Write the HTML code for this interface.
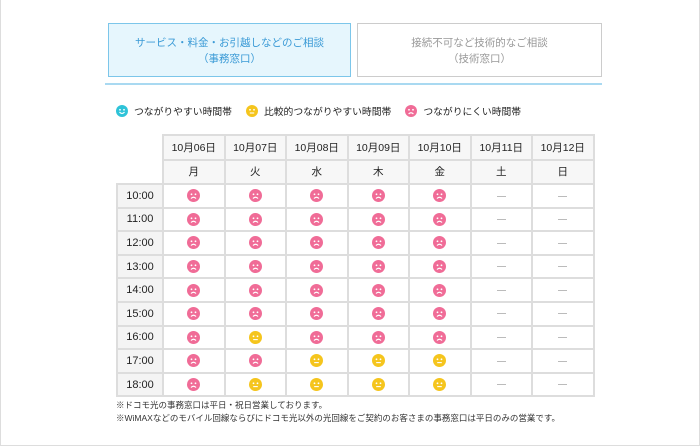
<!DOCTYPE html>
<html><head><meta charset="utf-8"><style>
*{margin:0;padding:0;box-sizing:border-box}
body{width:700px;height:446px;background:#fff;font-family:"Liberation Sans","Noto Sans CJK JP",sans-serif;position:relative;overflow:hidden}
.frame{position:absolute;left:0;top:0;width:700px;height:446px;border:1px solid #ddd;border-top:none}
.tab{position:absolute;top:23px;height:54px;text-align:center;font-size:10.5px;line-height:16px;padding-top:11px}
.t1{left:108px;width:243px;background:#e6f6fd;border:1px solid #7cc6ea;color:#3a9ad6}
.t2{left:357px;width:245px;background:#fff;border:1px solid #ccc;color:#999}
.line{position:absolute;left:105px;top:83px;width:497px;height:2px;background:#a9d9f1}
.legend{position:absolute;top:104px;left:116px;font-size:9.8px;color:#222;display:flex;align-items:center}
.legend span{display:flex;align-items:center;margin-right:14px}
.legend svg{margin-right:6px}
table{position:absolute;left:116px;top:134px;border-collapse:collapse;font-size:10.5px;color:#222}
td{border:2px solid #ddd;text-align:center;vertical-align:middle;height:23.6px;width:61.5px;padding:0}
tr.h td{height:24.5px;background:#f7f7f7}
tr.h td.e{border:none;background:#fff;width:46px}
td.tm{background:#f4f4f4;font-size:11px;width:46px}
td svg{display:block;margin:0 auto}
.dash{display:inline-block;width:9px;height:1px;background:#bbb;vertical-align:middle}
.note{position:absolute;left:116px;font-size:8.5px;color:#333}
</style></head><body>
<div class="frame"></div>
<div class="tab t1">サービス・料金・お引越しなどのご相談<br>（事務窓口）</div>
<div class="tab t2">接続不可など技術的なご相談<br>（技術窓口）</div>
<div class="line"></div>
<div class="legend">
<span><svg width="12" height="12" viewBox="0 0 12 12"><circle cx="6" cy="6" r="6" fill="#2ec3d8"/><circle cx="4" cy="4.8" r=".9" fill="#fff"/><circle cx="8" cy="4.8" r=".9" fill="#fff"/><path d="M3.5 7 Q6 10 8.5 7" stroke="#fff" stroke-width="1.2" fill="none"/></svg>つながりやすい時間帯</span>
<span><svg width="12" height="12" viewBox="0 0 12 12"><circle cx="6" cy="6" r="6" fill="#f5c51d"/><circle cx="4" cy="4.8" r=".9" fill="#fff"/><circle cx="8" cy="4.8" r=".9" fill="#fff"/><path d="M3.8 8H8.2" stroke="#fff" stroke-width="1.1"/></svg>比較的つながりやすい時間帯</span>
<span><svg width="12" height="12" viewBox="0 0 12 12"><circle cx="6" cy="6" r="6" fill="#f06c97"/><circle cx="4" cy="4.8" r=".9" fill="#fff"/><circle cx="8" cy="4.8" r=".9" fill="#fff"/><path d="M3.6 9 Q6 6.5 8.4 9" stroke="#fff" stroke-width="1.2" fill="none"/></svg>つながりにくい時間帯</span>
</div>
<svg width="0" height="0" style="position:absolute"><defs>
<g id="p"><circle cx="6.5" cy="6.5" r="6.5" fill="#f06c97"/><circle cx="4.5" cy="5.3" r=".9" fill="#fff"/><circle cx="8.5" cy="5.3" r=".9" fill="#fff"/><path d="M4 9.5 Q6.5 7 9 9.5" stroke="#fff" stroke-width="1.2" fill="none"/></g>
<g id="y"><circle cx="6.5" cy="6.5" r="6.5" fill="#f5c51d"/><circle cx="4.5" cy="5.3" r=".9" fill="#fff"/><circle cx="8.5" cy="5.3" r=".9" fill="#fff"/><path d="M4.2 8.6H8.8" stroke="#fff" stroke-width="1.1"/></g>
</defs></svg>
<table>
<tr class="h"><td class="e"></td><td>10月06日</td><td>10月07日</td><td>10月08日</td><td>10月09日</td><td>10月10日</td><td>10月11日</td><td>10月12日</td></tr>
<tr class="h"><td class="e"></td><td>月</td><td>火</td><td>水</td><td>木</td><td>金</td><td>土</td><td>日</td></tr>
<tr><td class="tm">10:00</td><td><svg width="13" height="13"><use href="#p"/></svg></td><td><svg width="13" height="13"><use href="#p"/></svg></td><td><svg width="13" height="13"><use href="#p"/></svg></td><td><svg width="13" height="13"><use href="#p"/></svg></td><td><svg width="13" height="13"><use href="#p"/></svg></td><td><span class="dash"></span></td><td><span class="dash"></span></td></tr>
<tr><td class="tm">11:00</td><td><svg width="13" height="13"><use href="#p"/></svg></td><td><svg width="13" height="13"><use href="#p"/></svg></td><td><svg width="13" height="13"><use href="#p"/></svg></td><td><svg width="13" height="13"><use href="#p"/></svg></td><td><svg width="13" height="13"><use href="#p"/></svg></td><td><span class="dash"></span></td><td><span class="dash"></span></td></tr>
<tr><td class="tm">12:00</td><td><svg width="13" height="13"><use href="#p"/></svg></td><td><svg width="13" height="13"><use href="#p"/></svg></td><td><svg width="13" height="13"><use href="#p"/></svg></td><td><svg width="13" height="13"><use href="#p"/></svg></td><td><svg width="13" height="13"><use href="#p"/></svg></td><td><span class="dash"></span></td><td><span class="dash"></span></td></tr>
<tr><td class="tm">13:00</td><td><svg width="13" height="13"><use href="#p"/></svg></td><td><svg width="13" height="13"><use href="#p"/></svg></td><td><svg width="13" height="13"><use href="#p"/></svg></td><td><svg width="13" height="13"><use href="#p"/></svg></td><td><svg width="13" height="13"><use href="#p"/></svg></td><td><span class="dash"></span></td><td><span class="dash"></span></td></tr>
<tr><td class="tm">14:00</td><td><svg width="13" height="13"><use href="#p"/></svg></td><td><svg width="13" height="13"><use href="#p"/></svg></td><td><svg width="13" height="13"><use href="#p"/></svg></td><td><svg width="13" height="13"><use href="#p"/></svg></td><td><svg width="13" height="13"><use href="#p"/></svg></td><td><span class="dash"></span></td><td><span class="dash"></span></td></tr>
<tr><td class="tm">15:00</td><td><svg width="13" height="13"><use href="#p"/></svg></td><td><svg width="13" height="13"><use href="#p"/></svg></td><td><svg width="13" height="13"><use href="#p"/></svg></td><td><svg width="13" height="13"><use href="#p"/></svg></td><td><svg width="13" height="13"><use href="#p"/></svg></td><td><span class="dash"></span></td><td><span class="dash"></span></td></tr>
<tr><td class="tm">16:00</td><td><svg width="13" height="13"><use href="#p"/></svg></td><td><svg width="13" height="13"><use href="#y"/></svg></td><td><svg width="13" height="13"><use href="#p"/></svg></td><td><svg width="13" height="13"><use href="#p"/></svg></td><td><svg width="13" height="13"><use href="#p"/></svg></td><td><span class="dash"></span></td><td><span class="dash"></span></td></tr>
<tr><td class="tm">17:00</td><td><svg width="13" height="13"><use href="#p"/></svg></td><td><svg width="13" height="13"><use href="#p"/></svg></td><td><svg width="13" height="13"><use href="#y"/></svg></td><td><svg width="13" height="13"><use href="#y"/></svg></td><td><svg width="13" height="13"><use href="#y"/></svg></td><td><span class="dash"></span></td><td><span class="dash"></span></td></tr>
<tr><td class="tm">18:00</td><td><svg width="13" height="13"><use href="#p"/></svg></td><td><svg width="13" height="13"><use href="#y"/></svg></td><td><svg width="13" height="13"><use href="#y"/></svg></td><td><svg width="13" height="13"><use href="#y"/></svg></td><td><svg width="13" height="13"><use href="#y"/></svg></td><td><span class="dash"></span></td><td><span class="dash"></span></td></tr>
</table>
<div class="note" style="top:399px">※ドコモ光の事務窓口は平日・祝日営業しております。</div>
<div class="note" style="top:412px">※WiMAXなどのモバイル回線ならびにドコモ光以外の光回線をご契約のお客さまの事務窓口は平日のみの営業です。</div>
</body></html>
